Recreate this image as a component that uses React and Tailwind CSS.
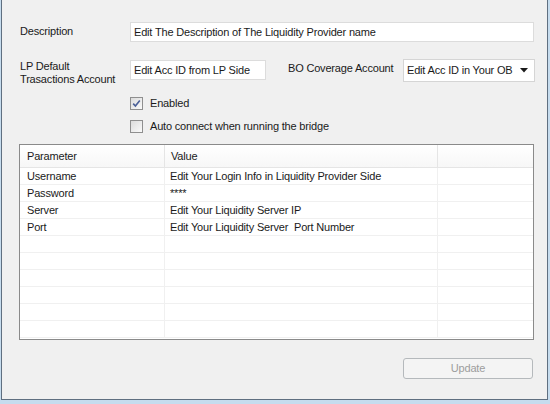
import React from 'react';

const rows = [
  { name: 'Username', value: 'Edit Your Login Info in Liquidity Provider Side' },
  { name: 'Password', value: '****' },
  { name: 'Server', value: 'Edit Your Liquidity Server IP' },
  { name: 'Port', value: 'Edit Your Liquidity Server  Port Number' },
  {}, {}, {}, {}, {}, {},
];

const Checkbox = ({ checked, label }) => (
  <label className="flex items-center h-[13px]">
    <span className="w-[13px] h-[13px] border border-[#8f8f8f] bg-gradient-to-br from-[#dcdcdc] to-[#fafafa] flex items-center justify-center">
      {checked && (
        <svg width="9" height="9" viewBox="0 0 9 9">
          <path d="M1.2 4.6 L3.4 7 L7.8 1.4" fill="none" stroke="#4a5f97" strokeWidth="1.6" />
        </svg>
      )}
    </span>
    <span className="ml-[7px] text-[11px] text-[#1a1a1a]">{label}</span>
  </label>
);

function App() {
  return (
    <div className="w-[550px] h-[404px] bg-[#c6dcee] overflow-hidden" style={{ fontFamily: '"Liberation Sans", Arial, sans-serif' }}>
      <div className="ml-[1px] w-[547px] h-[400px] border-l border-r border-b border-[#5f6f80] bg-[#f0f0f0] flex flex-col text-[11px] tracking-[-0.18px] text-[#1a1a1a]">
        {/* description */}
        <div className="flex items-center pl-[18px] pr-[13px] mt-[22px] h-[20px]">
          <span className="w-[110px] -mt-[2px]">Description</span>
          <div className="flex-1 h-[20px] bg-white border border-[#dcdcdc] flex items-center pl-[3px]">
            Edit The Description of The Liquidity Provider name
          </div>
        </div>

        {/* accounts */}
        <div className="flex items-start pl-[18px] mt-[17px] h-[24px]">
          <span className="w-[110px] leading-[13px] pt-[1px]">LP Default<br />Trasactions Account</span>
          <div className="w-[136px] h-[20px] mt-[1px] bg-white border border-[#dcdcdc] flex items-center pl-[3px]">
            Edit Acc ID from LP Side
          </div>
          <span className="ml-[22px] w-[115px] pt-[1px]">BO Coverage Account</span>
          <div className="w-[132px] h-[23px] bg-white border border-[#d5d5d5] flex items-center pl-[3px]">
            <span className="flex-1">Edit Acc ID in Your OB</span>
            <svg width="8" height="5" viewBox="0 0 8 5" className="mr-[6px]">
              <path d="M0 0 H8 L4 4.5 Z" fill="#1a1a1a" />
            </svg>
          </div>
        </div>

        {/* checkboxes */}
        <div className="flex flex-col gap-[10px] pl-[128px] mt-[14px]">
          <Checkbox checked label="Enabled" />
          <Checkbox label="Auto connect when running the bridge" />
        </div>

        {/* grid */}
        <div className="ml-[17px] mt-[11px] w-[515px] h-[196px] border border-[#8a8a8a] bg-white overflow-hidden">
          <div className="flex h-[23px] bg-gradient-to-b from-white to-[#f7f7f7] border-b border-[#e5e5e5]">
            <div className="w-[145px] pl-[7px] flex items-center border-r border-[#e5e5e5]">Parameter</div>
            <div className="w-[273px] pl-[6px] flex items-center border-r border-[#e5e5e5]">Value</div>
            <div className="flex-1" />
          </div>
          {rows.map((r, i) => (
            <div key={i} className="flex h-[17px] border-b border-[#f0f0f0]">
              <div className="w-[145px] pl-[7px] flex items-center border-r border-[#f0f0f0]">{r.name}</div>
              <div className="w-[273px] pl-[5px] flex items-center border-r border-[#f0f0f0] whitespace-pre">{r.value}</div>
              <div className="flex-1" />
            </div>
          ))}
        </div>

        {/* footer */}
        <div className="flex justify-end pr-[14px] mt-[18px]">
          <button className="w-[130px] h-[21px] rounded-[3px] border border-[#b5b9bc] bg-[#f4f4f4] text-[#9d9d9d] text-[11px]">
            Update
          </button>
        </div>
      </div>
    </div>
  );
}

export default App;
